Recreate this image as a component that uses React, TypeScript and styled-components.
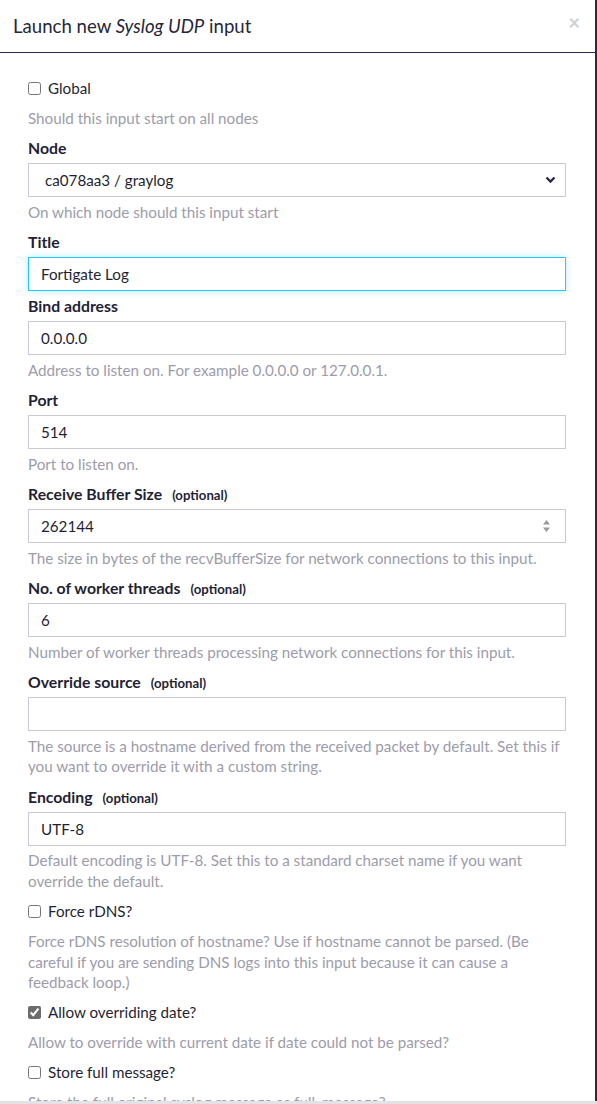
import React from "react";
import styled, { createGlobalStyle, css } from "styled-components";

const GlobalStyle = createGlobalStyle`
  html, body {
    margin: 0;
    padding: 0;
    background: #fff;
  }
  * { box-sizing: border-box; }
`;

const ink = "#1f1f36";
const muted = "#9c9cab";
const edge = "#2b2752";

const Page = styled.div`
  width: 597px;
  height: 1104px;
  display: flex;
  flex-direction: column;
  overflow: hidden;
  font-family: Lato, "Noto Sans", sans-serif;
  color: ${ink};
`;

const Modal = styled.div`
  flex: 1;
  min-height: 0;
  display: flex;
  flex-direction: column;
  border-right: 2px solid ${edge};
  overflow: hidden;
`;

const Header = styled.div`
  height: 53px;
  flex-shrink: 0;
  display: flex;
  align-items: center;
  justify-content: space-between;
  padding: 0 15px 0 13px;
  border-bottom: 1px solid ${edge};
  .title {
    font-size: 18.6px;
    color: #26263a;
  }
  .close {
    font-size: 20px;
    font-weight: 700;
    color: #cfcfd4;
    line-height: 1;
    margin-top: -8px;
  }
`;

const Body = styled.div`
  flex: 1;
  min-height: 0;
  overflow: hidden;
  padding: 25px 29px 0 28px;
`;

const Strip = styled.div`
  height: 3px;
  flex-shrink: 0;
  background: #e3e3e6;
`;

const Group = styled.div`
  margin-bottom: 5px;
`;

const Label = styled.label`
  display: flex;
  align-items: baseline;
  height: 20px;
  font-weight: 700;
  font-size: 15.8px;
  line-height: 20px;
  margin-bottom: 5px;
  color: ${ink};
  .opt {
    font-size: 13.2px;
    margin-left: 10px;
  }
`;

const ControlWrap = styled.div`
  position: relative;
`;

const Control = styled.div<{ $focused?: boolean; $select?: boolean }>`
  height: 34px;
  display: flex;
  align-items: center;
  padding: 0 12px 0 ${(p) => (p.$select ? 16 : 12)}px;
  border: 1px solid #c7c8d8;
  font-size: 15.2px;
  color: ${ink};
  background: #fff;
  white-space: pre;
  ${(p) =>
    p.$focused &&
    css`
      border-color: #24c6ff;
      box-shadow: 0 0 7px rgba(36, 198, 255, 0.35);
    `}
`;

const Adornment = styled.div<{ $inset?: number }>`
  position: absolute;
  top: 0;
  bottom: 0;
  right: ${(p) => p.$inset ?? 10}px;
  display: flex;
  align-items: center;
  pointer-events: none;
`;

const Help = styled.div<{ $afterCheck?: boolean }>`
  font-size: 15.2px;
  line-height: 20.5px;
  color: ${muted};
  margin: ${(p) => (p.$afterCheck ? "10px 0 9.5px" : "4.5px 0 10px")};
`;

const CheckRow = styled.label`
  display: flex;
  align-items: center;
  gap: 7px;
  height: 20px;
  font-size: 15.2px;
  color: ${ink};
  input {
    width: 13px;
    height: 13px;
    margin: 0;
    accent-color: #6c6c6c;
  }
`;

const Chevron = () => (
  <svg width="11" height="8" viewBox="0 0 11 8">
    <polyline points="1.5,1.5 5.5,5.5 9.5,1.5" fill="none" stroke="#2a2a44" strokeWidth="2.4" />
  </svg>
);

const Spinner = () => (
  <svg width="9" height="16" viewBox="0 0 9 16">
    <polygon points="4.5,2 8,6.5 1,6.5" fill="#9a9a9a" />
    <polygon points="1,9.5 8,9.5 4.5,14" fill="#9a9a9a" />
  </svg>
);

type FieldProps = {
  label: string;
  optional?: boolean;
  value?: string;
  help?: string;
  focused?: boolean;
  kind?: "text" | "select" | "number";
};

const Field = ({ label, optional, value, help, focused, kind = "text" }: FieldProps) => (
  <Group>
    <Label>
      {label}
      {optional && <span className="opt">(optional)</span>}
    </Label>
    <ControlWrap>
      <Control $focused={focused} $select={kind === "select"}>
        {value}
      </Control>
      {kind === "select" && (
        <Adornment>
          <Chevron />
        </Adornment>
      )}
      {kind === "number" && (
        <Adornment $inset={15}>
          <Spinner />
        </Adornment>
      )}
    </ControlWrap>
    {help && <Help>{help}</Help>}
  </Group>
);

const Check = ({ label, help, checked }: { label: string; help: string; checked?: boolean }) => (
  <div>
    <CheckRow>
      <input type="checkbox" defaultChecked={checked} />
      {label}
    </CheckRow>
    <Help $afterCheck>{help}</Help>
  </div>
);

export default function App() {
  return (
    <Page>
      <GlobalStyle />
      <Modal>
        <Header>
          <span className="title">
            Launch new <em>Syslog UDP</em> input
          </span>
          <span className="close">×</span>
        </Header>
        <Body>
          <Check label="Global" help="Should this input start on all nodes" />
          <Field label="Node" kind="select" value="ca078aa3 / graylog" help="On which node should this input start" />
          <Field label="Title" value="Fortigate Log" focused />
          <Field label="Bind address" value="0.0.0.0" help="Address to listen on. For example 0.0.0.0 or 127.0.0.1." />
          <Field label="Port" value="514" help="Port to listen on." />
          <Field
            label="Receive Buffer Size"
            optional
            kind="number"
            value="262144"
            help="The size in bytes of the recvBufferSize for network connections to this input."
          />
          <Field
            label="No. of worker threads"
            optional
            value="6"
            help="Number of worker threads processing network connections for this input."
          />
          <Field
            label="Override source"
            optional
            help="The source is a hostname derived from the received packet by default. Set this if you want to override it with a custom string."
          />
          <Field
            label="Encoding"
            optional
            value="UTF-8"
            help="Default encoding is UTF-8. Set this to a standard charset name if you want override the default."
          />
          <Check
            label="Force rDNS?"
            help="Force rDNS resolution of hostname? Use if hostname cannot be parsed. (Be careful if you are sending DNS logs into this input because it can cause a feedback loop.)"
          />
          <Check
            label="Allow overriding date?"
            checked
            help="Allow to override with current date if date could not be parsed?"
          />
          <Check label="Store full message?" help="Store the full original syslog message as full_message?" />
        </Body>
      </Modal>
      <Strip />
    </Page>
  );
}
